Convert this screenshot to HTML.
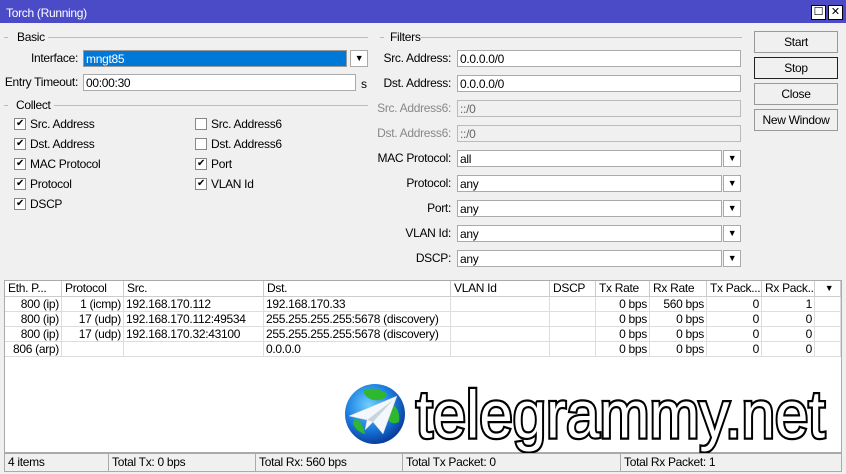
<!DOCTYPE html>
<html><head><meta charset="utf-8"><style>
*{box-sizing:border-box;margin:0;padding:0}
body{width:846px;height:474px;background:#f0f0f0;font-family:"Liberation Sans",sans-serif;font-size:12px;letter-spacing:-0.3px;color:#000;position:relative;overflow:hidden}
.a{position:absolute;white-space:nowrap}
.title{left:0;top:0;width:846px;height:23px;background:#4b4bc8;color:#fff;font-size:12px;padding:6px 0 0 6px}
.tb{width:15px;height:15px;background:#fff;border:1px solid #000;top:5px;font-size:11px;text-align:center;line-height:13px;color:#000;letter-spacing:0}
.inp{background:#fff;border:1px solid #aaa;height:17px;padding:1px 2px;line-height:14px}
.dis{background:#f0f0f0;border:1px solid #bbb;color:#666}
.dd{width:18px;height:17px;background:#fff;border:1px solid #aaa;text-align:center;font-size:9px;line-height:15px}
.lbl{text-align:right;line-height:17px}
.leg{line-height:14px}
.line{height:1px;background:#bbb}
.cb{width:12px;height:12px;background:#fff;border:1px solid #888;font-size:10px;line-height:10px;text-align:center}
.btn{left:754px;width:84px;height:22px;border:1px solid #999;background:#f0f0f0;text-align:center;line-height:20px}
.tbl{left:4px;top:280px;width:838px;height:173px;background:#fff;border:1px solid #aaa}
.hd{top:281px;height:16px;border-right:1px solid #ccc;border-bottom:1px solid #ccc;padding-left:3px;line-height:15px;background:#fff;overflow:hidden}
.row{height:15px;line-height:15px}
.c{position:absolute;top:0;height:15px;border-right:1px solid #ddd;border-bottom:1px solid #ddd;overflow:hidden;padding:0 2px}
.r{text-align:right}
.st{top:453px;height:19px;border:1px solid #aaa;background:#f0f0f0;line-height:17px;padding-left:3px}
</style></head><body>
<div class="a title">Torch (Running)</div>
<div class="a tb" style="left:811px">☐</div>
<div class="a tb" style="left:828px">✕</div>

<div class="a line" style="left:4px;top:37px;width:4px"></div>
<div class="a leg" style="left:17px;top:30px">Basic</div>
<div class="a line" style="left:48px;top:37px;width:320px"></div>
<div class="a lbl" style="left:0;top:50px;width:78px">Interface:</div>
<div class="a inp" style="left:83px;top:50px;width:264px;background:#0078d7;color:#fff;border-color:#999">mngt85</div>
<div class="a dd" style="left:350px;top:50px">▼</div>
<div class="a lbl" style="left:0;top:74px;width:78px">Entry Timeout:</div>
<div class="a inp" style="left:83px;top:74px;width:273px">00:00:30</div>
<div class="a" style="left:361px;top:77px">s</div>
<div class="a line" style="left:4px;top:105px;width:4px"></div>
<div class="a leg" style="left:16px;top:98px">Collect</div>
<div class="a line" style="left:54px;top:105px;width:314px"></div>

<div class="a cb" style="left:14px;top:118px">✔</div><div class="a" style="left:30px;top:117px">Src. Address</div>
<div class="a cb" style="left:14px;top:138px">✔</div><div class="a" style="left:30px;top:137px">Dst. Address</div>
<div class="a cb" style="left:14px;top:158px">✔</div><div class="a" style="left:30px;top:157px">MAC Protocol</div>
<div class="a cb" style="left:14px;top:178px">✔</div><div class="a" style="left:30px;top:177px">Protocol</div>
<div class="a cb" style="left:14px;top:198px">✔</div><div class="a" style="left:30px;top:197px">DSCP</div>
<div class="a cb" style="left:195px;top:118px"></div><div class="a" style="left:211px;top:117px">Src. Address6</div>
<div class="a cb" style="left:195px;top:138px"></div><div class="a" style="left:211px;top:137px">Dst. Address6</div>
<div class="a cb" style="left:195px;top:158px">✔</div><div class="a" style="left:211px;top:157px">Port</div>
<div class="a cb" style="left:195px;top:178px">✔</div><div class="a" style="left:211px;top:177px">VLAN Id</div>

<div class="a line" style="left:380px;top:37px;width:4px"></div>
<div class="a leg" style="left:390px;top:30px">Filters</div>
<div class="a line" style="left:421px;top:37px;width:321px"></div>
<div class="a lbl" style="left:370px;top:50px;width:81px">Src. Address:</div><div class="a inp" style="left:457px;top:50px;width:284px">0.0.0.0/0</div>
<div class="a lbl" style="left:370px;top:75px;width:81px">Dst. Address:</div><div class="a inp" style="left:457px;top:75px;width:284px">0.0.0.0/0</div>
<div class="a lbl" style="left:370px;top:100px;width:81px;color:#888">Src. Address6:</div><div class="a inp dis" style="left:457px;top:100px;width:284px">::/0</div>
<div class="a lbl" style="left:370px;top:125px;width:81px;color:#888">Dst. Address6:</div><div class="a inp dis" style="left:457px;top:125px;width:284px">::/0</div>
<div class="a lbl" style="left:370px;top:150px;width:81px">MAC Protocol:</div><div class="a inp" style="left:457px;top:150px;width:265px">all</div><div class="a dd" style="left:723px;top:150px">▼</div>
<div class="a lbl" style="left:370px;top:175px;width:81px">Protocol:</div><div class="a inp" style="left:457px;top:175px;width:265px">any</div><div class="a dd" style="left:723px;top:175px">▼</div>
<div class="a lbl" style="left:370px;top:200px;width:81px">Port:</div><div class="a inp" style="left:457px;top:200px;width:265px">any</div><div class="a dd" style="left:723px;top:200px">▼</div>
<div class="a lbl" style="left:370px;top:225px;width:81px">VLAN Id:</div><div class="a inp" style="left:457px;top:225px;width:265px">any</div><div class="a dd" style="left:723px;top:225px">▼</div>
<div class="a lbl" style="left:370px;top:250px;width:81px">DSCP:</div><div class="a inp" style="left:457px;top:250px;width:265px">any</div><div class="a dd" style="left:723px;top:250px">▼</div>

<div class="a btn" style="top:31px">Start</div>
<div class="a btn" style="top:57px;border:1px solid #222">Stop</div>
<div class="a btn" style="top:83px">Close</div>
<div class="a btn" style="top:109px">New Window</div>

<div class="a tbl"></div>
<div class="a hd" style="left:5px;width:57px">Eth. P...</div>
<div class="a hd" style="left:62px;width:62px">Protocol</div>
<div class="a hd" style="left:124px;width:140px">Src.</div>
<div class="a hd" style="left:264px;width:187px">Dst.</div>
<div class="a hd" style="left:451px;width:99px">VLAN Id</div>
<div class="a hd" style="left:550px;width:46px">DSCP</div>
<div class="a hd" style="left:596px;width:54px">Tx Rate</div>
<div class="a hd" style="left:650px;width:57px">Rx Rate</div>
<div class="a hd" style="left:707px;width:55px">Tx Pack...</div>
<div class="a hd" style="left:762px;width:53px">Rx Pack...</div>
<div class="a hd" style="left:815px;width:26px;font-size:9px;text-align:center">▼</div>

<div class="a row" style="left:5px;top:297px;width:836px">
<div class="c r" style="left:0;width:57px">800 (ip)</div><div class="c r" style="left:57px;width:62px">1 (icmp)</div><div class="c" style="left:119px;width:140px">192.168.170.112</div><div class="c" style="left:259px;width:187px">192.168.170.33</div><div class="c" style="left:446px;width:99px"></div><div class="c" style="left:545px;width:46px"></div><div class="c r" style="left:591px;width:54px">0 bps</div><div class="c r" style="left:645px;width:57px">560 bps</div><div class="c r" style="left:702px;width:55px">0</div><div class="c r" style="left:757px;width:53px">1</div><div class="c" style="left:810px;width:26px"></div></div>
<div class="a row" style="left:5px;top:312px;width:836px">
<div class="c r" style="left:0;width:57px">800 (ip)</div><div class="c r" style="left:57px;width:62px">17 (udp)</div><div class="c" style="left:119px;width:140px">192.168.170.112:49534</div><div class="c" style="left:259px;width:187px">255.255.255.255:5678 (discovery)</div><div class="c" style="left:446px;width:99px"></div><div class="c" style="left:545px;width:46px"></div><div class="c r" style="left:591px;width:54px">0 bps</div><div class="c r" style="left:645px;width:57px">0 bps</div><div class="c r" style="left:702px;width:55px">0</div><div class="c r" style="left:757px;width:53px">0</div><div class="c" style="left:810px;width:26px"></div></div>
<div class="a row" style="left:5px;top:327px;width:836px">
<div class="c r" style="left:0;width:57px">800 (ip)</div><div class="c r" style="left:57px;width:62px">17 (udp)</div><div class="c" style="left:119px;width:140px">192.168.170.32:43100</div><div class="c" style="left:259px;width:187px">255.255.255.255:5678 (discovery)</div><div class="c" style="left:446px;width:99px"></div><div class="c" style="left:545px;width:46px"></div><div class="c r" style="left:591px;width:54px">0 bps</div><div class="c r" style="left:645px;width:57px">0 bps</div><div class="c r" style="left:702px;width:55px">0</div><div class="c r" style="left:757px;width:53px">0</div><div class="c" style="left:810px;width:26px"></div></div>
<div class="a row" style="left:5px;top:342px;width:836px">
<div class="c r" style="left:0;width:57px">806 (arp)</div><div class="c r" style="left:57px;width:62px"></div><div class="c" style="left:119px;width:140px"></div><div class="c" style="left:259px;width:187px">0.0.0.0</div><div class="c" style="left:446px;width:99px"></div><div class="c" style="left:545px;width:46px"></div><div class="c r" style="left:591px;width:54px">0 bps</div><div class="c r" style="left:645px;width:57px">0 bps</div><div class="c r" style="left:702px;width:55px">0</div><div class="c r" style="left:757px;width:53px">0</div><div class="c" style="left:810px;width:26px"></div></div>

<svg class="a" style="left:343px;top:382px" width="64" height="64" viewBox="0 0 64 64">
<defs><radialGradient id="g" cx="40%" cy="35%" r="65%"><stop offset="0" stop-color="#6fd0ff"/><stop offset="0.6" stop-color="#1a7ee0"/><stop offset="1" stop-color="#0a3fa0"/></radialGradient></defs>
<circle cx="32" cy="32" r="30" fill="url(#g)"/>
<path d="M20 8 Q34 4 44 12 Q40 20 30 18 Q22 16 20 8Z M46 20 Q58 26 56 40 Q48 44 44 36 Q40 28 46 20Z M12 36 Q20 40 22 52 Q14 50 10 42Z" fill="#2fb82f"/>
<path d="M6 34 L54 14 L40 52 L30 40 L22 48 L24 38Z" fill="#f4f8fc" stroke="#ccd" stroke-width="0.5"/>
<path d="M24 38 L50 18 L30 40Z" fill="#c8d4e0"/>
</svg>
<div class="a" style="left:416px;top:376px;font-size:60px;letter-spacing:0;color:#fff;-webkit-text-stroke:4px #000;paint-order:stroke fill;transform:scaleY(1.12);transform-origin:0 0">telegrammy.net</div>

<div class="a st" style="left:4px;width:105px">4 items</div>
<div class="a st" style="left:108px;width:148px">Total Tx: 0 bps</div>
<div class="a st" style="left:255px;width:148px">Total Rx: 560 bps</div>
<div class="a st" style="left:402px;width:219px">Total Tx Packet: 0</div>
<div class="a st" style="left:620px;width:222px">Total Rx Packet: 1</div>
</body></html>
